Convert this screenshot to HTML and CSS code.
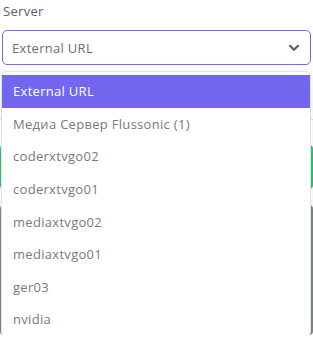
FILE: index.html
```html
<!DOCTYPE html>
<html lang="ru">
<head>
<meta charset="UTF-8" />
<meta name="viewport" content="width=device-width, initial-scale=1" />
<title>Server</title>
<link rel="stylesheet" href="styles.css">
</head>
<body>

<div class="field">
  <label class="field-label">Server</label>
  <div class="select open">
    <span class="select-value">External URL</span>
    <svg class="chevron" width="12" height="8" viewBox="0 0 12 8">
      <path d="M2 1.8 L6 5.8 L10 1.8" fill="none" stroke="#5e5e5e" stroke-width="2.2" stroke-linecap="round" stroke-linejoin="round"/>
    </svg>
  </div>

  <ul class="menu">
    <li class="selected">External URL</li>
    <li>Медиа Сервер Flussonic (1)</li>
    <li>coderxtvgo02</li>
    <li>coderxtvgo01</li>
    <li>mediaxtvgo02</li>
    <li>mediaxtvgo01</li>
    <li>ger03</li>
    <li>nvidia</li>
  </ul>
</div>

<div class="behind">
  <div class="rule"></div>
  <div class="btn-green"></div>
  <div class="box-gray"></div>
</div>

</body>
</html>
```

FILE: styles.css
```css
body {
  margin: 0;
  background: #fff;
  font-family: "Open Sans", "Noto Sans", sans-serif;
  color: #6e6b7b;
}
.field {
  position: relative;
  padding: 0 2px;
}
.field-label {
  display: block;
  font-size: 13px;
  letter-spacing: 0.3px;
  color: #5e5873;
  padding: 2px 1px 0;
  height: 28px;
}
.select {
  height: 33px;
  border: 1px solid #7367f0;
  border-radius: 5px;
  display: flex; align-items: center; justify-content: space-between;
  padding: 0 9px 0 9px;
  font-size: 13px;
  letter-spacing: 0.3px;
  color: #6e6b7b;
}
.chevron {
  margin-right: 1px;
}
.menu {
  position: absolute;
  top: 71px; left: 1px; right: 2px;
  margin: 0;
  padding: 3px 0 0;
  list-style: none;
  background: #fff;
  border: 1px solid #e4e4e4;
  border-radius: 5px;
  box-shadow: 0 4px 18px rgba(0,0,0,0.08);
  z-index: 10;
}
.menu li {
  height: 32.6px;
  display: flex; align-items: center;
  padding: 0 11px;
  font-size: 13px;
  letter-spacing: 0.3px;
  color: #7a7784;
}
.menu li.selected {
  background: #7367f0;
  color: #fff;
}
.rule {
  height: 1px;
  background: #dcdcdc;
  margin-top: 54px;
}
.btn-green {
  height: 44px;
  background: #28c76f;
  margin-top: 25px;
  border-radius: 4px;
}
.box-gray {
  height: 130px;
  background: #82868b;
  margin-top: 16px;
  border-radius: 4px;
}
```
